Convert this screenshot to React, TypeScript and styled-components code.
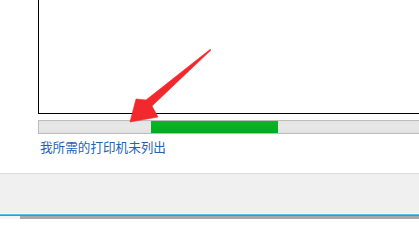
import React from "react";
import styled, { createGlobalStyle } from "styled-components";

const GlobalStyle = createGlobalStyle`
  html, body {
    margin: 0;
    padding: 0;
    background: #ffffff;
    overflow: hidden;
  }
  body {
    width: 419px;
    height: 219px;
  }
`;

const Window = styled.div`
  position: relative;
  width: 419px;
  height: 219px;
  display: flex;
  flex-direction: column;
  font-family: "Noto Sans CJK SC", "Microsoft YaHei", sans-serif;
`;

const Content = styled.div`
  height: 173px;
  padding-left: 38px;
  display: flex;
  flex-direction: column;
  background: #ffffff;
`;

const ListFrame = styled.div`
  height: 114px;
  border-left: 1px solid #000000;
  border-bottom: 1px solid #000000;
  box-sizing: border-box;
  margin-right: -2px;
`;

const Progress = styled.div`
  position: relative;
  margin-top: 6px;
  height: 14px;
  box-sizing: border-box;
  border: 1px solid #bcbcbc;
  border-right: none;
  background: linear-gradient(#e4e4e4, #e8e8e8 50%, #e2e2e2);
  overflow: hidden;
`;

const Chunk = styled.div<{ $left: number; $width: number }>`
  position: absolute;
  top: 0;
  bottom: 0;
  left: ${(p) => p.$left}px;
  width: ${(p) => p.$width}px;
  background: linear-gradient(#0cb42a, #06b025 50%, #05a922);
`;

const Link = styled.a`
  margin-top: 5px;
  margin-left: 2px;
  font-size: 12.6px;
  line-height: 16px;
  color: #1d64b8;
  text-decoration: none;
  cursor: pointer;
  white-space: nowrap;
`;

const Footer = styled.div`
  flex: 1;
  display: flex;
  flex-direction: column;
  border-top: 1px solid #dcdcdc;
  background: #f0f0f0;
`;

const FooterBody = styled.div`
  flex: 1;
`;

const FooterEdge = styled.div`
  height: 1px;
  background: #f7f7f7;
`;

const AccentLine = styled.div`
  height: 2px;
  background: linear-gradient(#6ed0f0, #1a8ad0);
`;

const BottomStrip = styled.div`
  height: 3px;
  background: linear-gradient(90deg, #f4f4f4 0, #f4f4f4 20px, #a8a8a8 20px);
`;

const ArrowOverlay = styled.svg`
  position: absolute;
  left: 0;
  top: 0;
  pointer-events: none;
`;

const RedArrow = () => (
  <ArrowOverlay width={419} height={219} viewBox="0 0 419 219">
    <path
      d="M211 50 L152 106 L158 117 L130 122 L136 99 L146 100 L210 49.5 Z"
      fill="#f2282c"
      stroke="#f2282c"
      strokeWidth={0.6}
      strokeLinejoin="round"
    />
  </ArrowOverlay>
);

export default function App() {
  return (
    <>
      <GlobalStyle />
      <Window>
        <Content>
          <ListFrame />
          <Progress>
            <Chunk $left={112} $width={127} />
          </Progress>
          <Link>我所需的打印机未列出</Link>
        </Content>
        <Footer>
          <FooterBody />
          <FooterEdge />
          <AccentLine />
          <BottomStrip />
        </Footer>
        <RedArrow />
      </Window>
    </>
  );
}
